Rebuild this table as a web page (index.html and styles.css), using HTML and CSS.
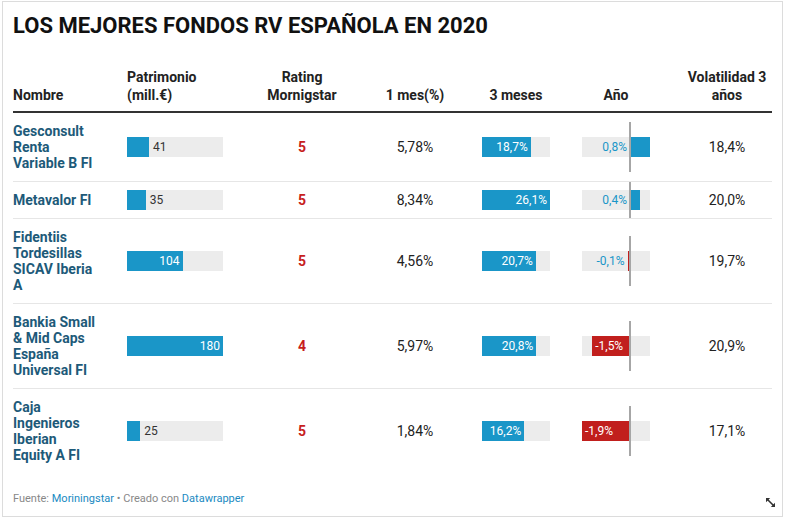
FILE: index.html
```html
<!DOCTYPE html>
<html lang="es">
<head>
<meta charset="utf-8">
<title>Los mejores fondos RV española en 2020</title>
<link rel="stylesheet" href="styles.css">
</head>
<body>
<div class="frame">
  <h1 class="title">LOS MEJORES FONDOS RV ESPAÑOLA EN 2020</h1>
  <table class="tbl">
    <colgroup>
      <col class="c-name"><col class="c-pat"><col class="c-rat"><col class="c-mes"><col class="c-3m"><col class="c-ano"><col class="c-vol">
    </colgroup>
    <thead>
      <tr>
        <th class="l">Nombre</th>
        <th class="l">Patrimonio<br>(mill.€)</th>
        <th>Rating<br>Mornigstar</th>
        <th>1 mes(%)</th>
        <th>3 meses</th>
        <th>Año</th>
        <th class="vol">Volatilidad 3<br>años</th>
      </tr>
    </thead>
    <tbody>
      <tr>
        <td class="name">Gesconsult Renta Variable B FI</td>
        <td><div class="bar pat"><div class="fill" style="width:21.9px"></div><span class="out">41</span></div></td>
        <td class="rating">5</td>
        <td class="num">5,78%</td>
        <td><div class="bar m3"><div class="fill" style="width:48.7px"><span>18,7%</span></div></div></td>
        <td class="ano"><div class="bar yr"><div class="neg"><span class="lbl">0,8%</span></div><div class="pos"><div class="fill" style="width:20.2px"></div></div><i class="axis"></i></div></td>
        <td class="num vol">18,4%</td>
      </tr>
      <tr>
        <td class="name">Metavalor FI</td>
        <td><div class="bar pat"><div class="fill" style="width:18.7px"></div><span class="out">35</span></div></td>
        <td class="rating">5</td>
        <td class="num">8,34%</td>
        <td><div class="bar m3"><div class="fill" style="width:68px"><span>26,1%</span></div></div></td>
        <td class="ano"><div class="bar yr"><div class="neg"><span class="lbl">0,4%</span></div><div class="pos"><div class="fill" style="width:10.1px"></div></div><i class="axis"></i></div></td>
        <td class="num vol">20,0%</td>
      </tr>
      <tr>
        <td class="name">Fidentiis Tordesillas SICAV Iberia A</td>
        <td><div class="bar pat"><div class="fill" style="width:55.5px"><span>104</span></div></div></td>
        <td class="rating">5</td>
        <td class="num">4,56%</td>
        <td><div class="bar m3"><div class="fill" style="width:53.9px"><span>20,7%</span></div></div></td>
        <td class="ano"><div class="bar yr"><div class="neg"><span class="lbl">-0,1%</span><div class="fill red" style="width:2.5px"></div></div><div class="pos"></div><i class="axis"></i></div></td>
        <td class="num vol">19,7%</td>
      </tr>
      <tr>
        <td class="name">Bankia Small &amp; Mid Caps España Universal FI</td>
        <td><div class="bar pat"><div class="fill" style="width:96px"><span>180</span></div></div></td>
        <td class="rating">4</td>
        <td class="num">5,97%</td>
        <td><div class="bar m3"><div class="fill" style="width:54.2px"><span>20,8%</span></div></div></td>
        <td class="ano"><div class="bar yr"><div class="neg"><div class="fill red in" style="width:37.8px"><span>-1,5%</span></div></div><div class="pos"></div><i class="axis"></i></div></td>
        <td class="num vol">20,9%</td>
      </tr>
      <tr class="last">
        <td class="name">Caja Ingenieros Iberian Equity A FI</td>
        <td><div class="bar pat"><div class="fill" style="width:13.3px"></div><span class="out">25</span></div></td>
        <td class="rating">5</td>
        <td class="num">1,84%</td>
        <td><div class="bar m3"><div class="fill" style="width:42.2px"><span>16,2%</span></div></div></td>
        <td class="ano"><div class="bar yr"><div class="neg"><div class="fill red in" style="width:48px"><span>-1,9%</span></div></div><div class="pos"></div><i class="axis"></i></div></td>
        <td class="num vol">17,1%</td>
      </tr>
    </tbody>
  </table>
  <p class="footer">Fuente: <a class="lnk">Moriningstar</a> • Creado con <a class="lnk">Datawrapper</a></p>
  <svg class="resize" width="11" height="11" viewBox="0 0 11 11" aria-hidden="true">
    <path d="M2 2 L9 9" stroke="#333" stroke-width="1.6" fill="none"/>
    <path d="M1 1 L5.2 1 L1 5.2 Z" fill="#333"/>
    <path d="M10 10 L5.8 10 L10 5.8 Z" fill="#333"/>
  </svg>
</div>
</body>
</html>
```

FILE: styles.css
```css
* { box-sizing: border-box; }
html, body { margin: 0; padding: 0; background: #fff; }
body { font-family: Roboto, "Liberation Sans", Arial, sans-serif; color: #333; }

.frame {
  position: relative;
  width: 781px;
  height: 516px;
  margin: 1px 0 0 2px;
  border: 1px solid #dcdcdc;
  padding: 11px 10px 10px 10px;
  display: flex;
  flex-direction: column;
}

.title {
  margin: 0;
  font-size: 22px;
  line-height: 26px;
  font-weight: 700;
  color: #111;
}

.tbl {
  margin-top: 29px;
  width: 759px;
  table-layout: fixed;
  border-collapse: collapse;
  font-size: 14px;
}
.c-name { width: 114px; }
.c-pat { width: 113px; }
.c-rat { width: 124px; }
.c-mes { width: 102px; }
.c-3m { width: 100px; }
.c-ano { width: 100px; }
.c-vol { width: 106px; }

.tbl th {
  font-weight: 700;
  line-height: 18px;
  color: #222;
  text-align: center;
  vertical-align: bottom;
  padding: 0 0 7px 0;
  border-bottom: 2px solid #333;
}
.tbl th.l { text-align: left; }
.tbl th.vol, .tbl td.vol { padding-left: 16px; }

.tbl td {
  padding: 8px 0;
  line-height: 16px;
  vertical-align: middle;
  border-bottom: 1px solid #e6e6e6;
}
.tbl tr.last td { border-bottom: none; }

.tbl td.name {
  font-weight: 700;
  color: #1d5a79;
  padding: 10px 30px 10px 0;
}
.rating {
  text-align: center;
  font-weight: 700;
  color: #c71e1d;
}
.num { text-align: center; color: #222; }

.bar {
  position: relative;
  display: flex;
  height: 20px;
  background: #ececec;
  font-size: 12px;
  line-height: 20px;
}
.bar.pat { width: 96px; }
.bar.m3, .bar.yr { width: 68px; margin: 0 auto; }

.fill {
  height: 20px;
  background: #1a96c8;
  color: #fff;
  display: flex;
  justify-content: flex-end;
  padding-right: 3px;
  flex: none;
  white-space: nowrap;
}
.fill.red { background: #c11f1d; padding-right: 0; }
.fill.in { justify-content: flex-start; padding-left: 3px; }
.out { margin-left: 4px; color: #333; }

.ano { overflow: hidden; }
.yr .neg {
  width: 48px;
  display: flex;
  justify-content: flex-end;
  flex: none;
}
.yr .pos { width: 20px; display: flex; flex: none; }
.yr .pos .fill { padding: 0; }
.yr .lbl { color: #1a96c8; margin-right: 3px; white-space: nowrap; }
.axis {
  position: absolute;
  left: 47px;
  top: -15px;
  bottom: -15px;
  width: 2px;
  background: #a6a6a6;
}

.footer {
  margin: auto 0 0 0;
  font-size: 11px;
  line-height: 14px;
  color: #888;
}
.lnk { color: #1a8ac2; text-decoration: none; }

.resize {
  position: absolute;
  right: 6px;
  bottom: 8px;
}
```
